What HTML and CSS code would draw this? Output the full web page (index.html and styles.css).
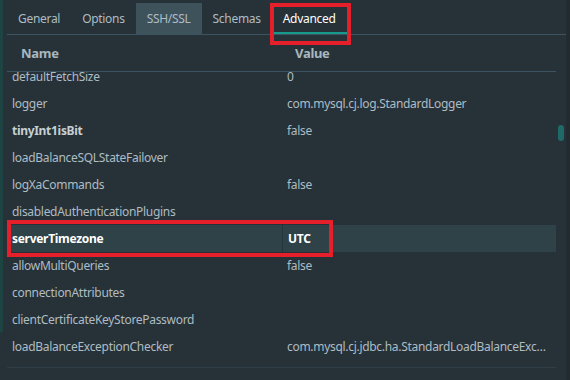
FILE: index.html
```html
<!DOCTYPE html>
<html lang="en">
<head>
    <meta charset="UTF-8">
    <title>Connection - Advanced</title>
    <link rel="stylesheet" href="styles.css">
</head>
<body>
    <div class="frame">
        <div class="edge"></div>

        <div class="panel">
            <!-- Tab bar -->
            <div class="tabs">
                <div class="tab">General</div>
                <div class="tab">Options</div>
                <div class="tab tab-hover">SSH/SSL</div>
                <div class="tab">Schemas</div>
                <div class="tab tab-active">Advanced</div>
            </div>

            <div class="content">
                <div class="grid">
                    <div class="head">
                        <div class="col-name">Name</div>
                        <div class="col-value">Value</div>
                    </div>

                    <div class="rows">
                        <div class="rows-inner">
                            <div class="row"><div class="cell-name">defaultFetchSize</div><div class="cell-value">0</div></div>
                            <div class="row"><div class="cell-name">logger</div><div class="cell-value">com.mysql.cj.log.StandardLogger</div></div>
                            <div class="row row-set"><div class="cell-name">tinyInt1isBit</div><div class="cell-value">false</div></div>
                            <div class="row"><div class="cell-name">loadBalanceSQLStateFailover</div><div class="cell-value"></div></div>
                            <div class="row"><div class="cell-name">logXaCommands</div><div class="cell-value">false</div></div>
                            <div class="row"><div class="cell-name">disabledAuthenticationPlugins</div><div class="cell-value"></div></div>
                            <div class="row row-selected"><div class="cell-name">serverTimezone</div><div class="cell-value">UTC</div></div>
                            <div class="row"><div class="cell-name">allowMultiQueries</div><div class="cell-value">false</div></div>
                            <div class="row"><div class="cell-name">connectionAttributes</div><div class="cell-value"></div></div>
                            <div class="row"><div class="cell-name">clientCertificateKeyStorePassword</div><div class="cell-value"></div></div>
                            <div class="row"><div class="cell-name">loadBalanceExceptionChecker</div><div class="cell-value">com.mysql.cj.jdbc.ha.StandardLoadBalanceExceptionChecker</div></div>
                        </div>
                    </div>
                </div>

                <div class="scroll">
                    <div class="thumb"></div>
                </div>
            </div>
        </div>

        <div class="rightbar"></div>
    </div>

    <!-- annotation boxes -->
    <div class="mark mark-tab"></div>
    <div class="mark mark-row"></div>
</body>
</html>
```

FILE: styles.css
```css
body {
    margin: 0;
    background-color: #263238;
    font-family: 'Noto Sans', 'Open Sans', sans-serif;
    font-size: 12px;
    letter-spacing: -0.3px;
    color: #afbcc3;
    width: 570px;
    height: 380px;
    overflow: hidden;
    position: relative;
}

.frame {
    display: flex;
    height: 380px;
}

.edge {
    width: 3px;
    height: 333px;
    background-color: #1e4343;
    border-radius: 0 0 3px 0;
}

.panel {
    flex: 1;
    padding-left: 4px;
    display: flex;
    flex-direction: column;
}

.rightbar {
    width: 4px;
    background-color: #212b30;
}

/* tabs */
.tabs {
    display: flex;
    margin-top: 3px;
    height: 31px;
    border-bottom: 1px solid #3c5461;
}

.tab {
    padding: 0 11px;
    line-height: 31px;
    color: #afbcc3;
}

.tab-hover {
    background-color: #3e525c;
}

.tab-active {
    color: #ffffff;
    box-shadow: inset 0 -2px 0 #169a8c;
}

/* table */
.content {
    display: flex;
}

.grid {
    width: 549px;
}

.head {
    display: flex;
    height: 36px;
    align-items: center;
    font-weight: bold;
    color: #a9b8bf;
    border-bottom: 1px solid #3c5461;
    font-size: 13px;
}

.head .col-name {
    width: 274px;
    padding-left: 14px;
}

.rows {
    height: 295px;
    overflow: hidden;
    border-bottom: 1px solid #2f3e46;
}

.rows-inner {
    margin-top: -9px;
}

.row {
    display: flex;
    height: 27px;
    align-items: center;
    padding-left: 3px;
}

.cell-name {
    width: 270px;
    padding-left: 2px;
    white-space: nowrap;
}

.cell-value {
    flex: 1;
    padding-left: 5px;
    padding-right: 4px;
    white-space: nowrap;
    overflow: hidden;
    text-overflow: ellipsis;
}

.row-set .cell-name {
    font-weight: bold;
    color: #c6d0d4;
}

.row-selected {
    background-color: #2f4247;
    color: #ffffff;
    font-weight: bold;
}

.row-selected .cell-name {
    border-right: 1px solid #263539;
    align-self: stretch;
    display: flex;
    align-items: center;
}

.scroll {
    width: 10px;
    padding-top: 90px;
    display: flex;
    justify-content: center;
    align-items: flex-start;
}

.thumb {
    width: 6px;
    height: 16px;
    border-radius: 3px;
    background-color: #1f6a68;
}

/* red annotation boxes */
.mark {
    position: absolute;
    border: 4px solid #e6202a;
}

.mark-tab {
    left: 270px;
    top: 3px;
    width: 73px;
    height: 34px;
}

.mark-row {
    left: 7px;
    top: 220px;
    width: 318px;
    height: 29px;
}
```
